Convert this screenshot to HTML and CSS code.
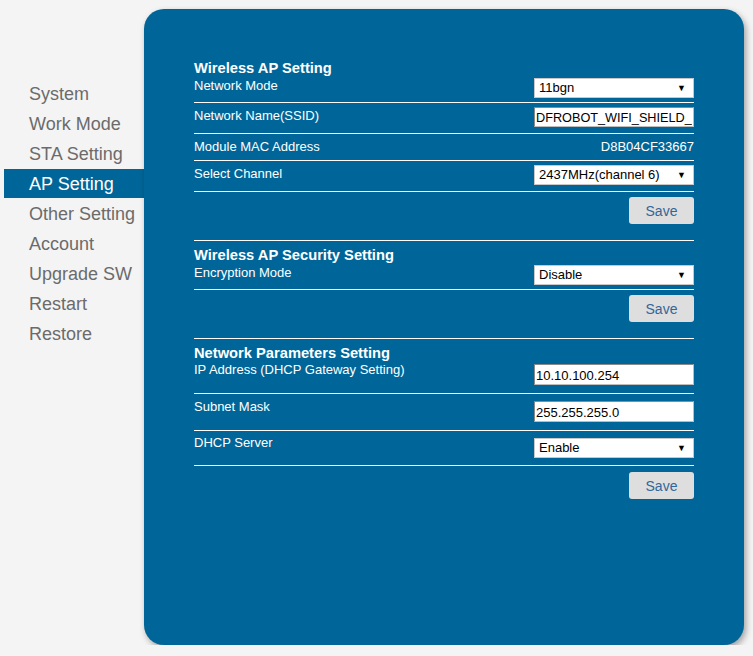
FILE: index.html
```html
<!DOCTYPE html>
<html lang="en">
<head>
<meta charset="utf-8">
<title>AP Setting</title>
<link rel="stylesheet" href="styles.css">
</head>
<body>
<div class="page">
  <nav class="sidebar">
    <a class="nav-item">System</a>
    <a class="nav-item">Work Mode</a>
    <a class="nav-item">STA Setting</a>
    <a class="nav-item active">AP Setting</a>
    <a class="nav-item">Other Setting</a>
    <a class="nav-item">Account</a>
    <a class="nav-item">Upgrade SW</a>
    <a class="nav-item">Restart</a>
    <a class="nav-item">Restore</a>
  </nav>
  <main class="panel">
    <section class="section">
      <h2 class="section-title">Wireless AP Setting</h2>
      <div class="row row-first">
        <span class="label">Network Mode</span>
        <div class="select"><span>11bgn</span><span class="arrow">▼</span></div>
      </div>
      <div class="row">
        <span class="label">Network Name(SSID)</span>
        <input class="input input-ssid" type="text" value="DFROBOT_WIFI_SHIELD_">
      </div>
      <div class="row row-text">
        <span class="label">Module MAC Address</span>
        <span class="value">D8B04CF33667</span>
      </div>
      <div class="row">
        <span class="label">Select Channel</span>
        <div class="select"><span>2437MHz(channel 6)</span><span class="arrow">▼</span></div>
      </div>
      <div class="row row-action">
        <button class="btn" type="button">Save</button>
      </div>
    </section>

    <section class="section">
      <h2 class="section-title">Wireless AP Security Setting</h2>
      <div class="row row-first">
        <span class="label">Encryption Mode</span>
        <div class="select"><span>Disable</span><span class="arrow">▼</span></div>
      </div>
      <div class="row row-action">
        <button class="btn" type="button">Save</button>
      </div>
    </section>

    <section class="section">
      <h2 class="section-title">Network Parameters Setting</h2>
      <div class="row row-ip">
        <span class="label">IP Address (DHCP Gateway Setting)</span>
        <input class="input" type="text" value="10.10.100.254">
      </div>
      <div class="row row-mask">
        <span class="label">Subnet Mask</span>
        <input class="input" type="text" value="255.255.255.0">
      </div>
      <div class="row row-dhcp">
        <span class="label">DHCP Server</span>
        <div class="select"><span>Enable</span><span class="arrow">▼</span></div>
      </div>
      <div class="row row-action row-action-last">
        <button class="btn" type="button">Save</button>
      </div>
    </section>
  </main>
</div>
</body>
</html>
```

FILE: styles.css
```css
* { box-sizing: border-box; }

html, body {
  margin: 0;
  padding: 0;
  background: #f4f4f4;
  font-family: "Liberation Sans", Arial, sans-serif;
}

.page {
  display: flex;
  align-items: flex-start;
  padding-left: 4px;
  padding-top: 9px;
}

.sidebar {
  width: 140px;
  display: flex;
  flex-direction: column;
  padding-top: 70px;
}

.nav-item {
  display: block;
  height: 30px;
  line-height: 30px;
  padding-left: 25px;
  font-size: 18px;
  color: #6b6b6b;
  text-decoration: none;
  white-space: nowrap;
}

.nav-item.active {
  background: #006699;
  color: #ffffff;
  height: 29px;
  margin-bottom: 1px;
}

.panel {
  width: 600px;
  height: 636px;
  background: #006699;
  border-radius: 20px;
  box-shadow: 2px 3px 6px rgba(0, 0, 0, 0.35);
  padding: 44px 50px 0 50px;
  color: #ffffff;
}

.section {
  width: 500px;
  padding-top: 7px;
}

.section + .section {
  padding-top: 6px;
}

.section-title {
  margin: 0;
  font-size: 14.7px;
  font-weight: bold;
  line-height: 16px;
}

.row {
  display: flex;
  justify-content: space-between;
  align-items: flex-start;
  border-bottom: 1px solid #ffffff;
  padding: 4px 0 6px 0;
}

.label {
  font-size: 13px;
  line-height: 18px;
}

.row-first {
  padding: 2px 0 4px 0;
}

.row-first .label {
  line-height: 15px;
}

.row-text {
  padding: 4px 0 4px 0;
}

.value {
  font-size: 13px;
  line-height: 18px;
}

.select {
  width: 160px;
  height: 20px;
  background: #ffffff;
  border: 1px solid #c8c8c8;
  color: #000000;
  font-size: 13px;
  line-height: 18px;
  padding: 0 7px 0 4px;
  display: flex;
  justify-content: space-between;
  align-items: center;
}

.arrow {
  font-size: 9px;
  line-height: 18px;
}

.input {
  width: 160px;
  height: 20px;
  margin: 0;
  background: #ffffff;
  border: 1px solid #bdbdbd;
  border-top-color: #8a8a8a;
  border-left-color: #8a8a8a;
  color: #000000;
  font-family: "Liberation Sans", Arial, sans-serif;
  font-size: 13px;
  padding: 1px 1px 0 1px;
  outline: none;
}

.input-ssid {
  font-size: 12.7px;
}

.row-ip {
  padding: 1px 0 8px 0;
}

.row-ip .label {
  line-height: 15px;
}

.row-ip .input {
  margin-top: 2px;
  height: 21px;
}

.row-mask {
  padding: 4px 0 8px 0;
}

.row-mask .input {
  margin-top: 3px;
  height: 21px;
}

.row-dhcp {
  padding: 3px 0 7px 0;
}

.row-dhcp .select {
  margin-top: 4px;
}

.row-action {
  justify-content: flex-end;
  padding: 5px 0 16px 0;
}

.row-action-last {
  border-bottom: none;
  padding-top: 6px;
}

.btn {
  width: 65px;
  height: 27px;
  border: none;
  border-radius: 3px;
  background: #dedede;
  color: #336699;
  font-family: "Liberation Sans", Arial, sans-serif;
  font-size: 14px;
  padding: 0;
}
```
